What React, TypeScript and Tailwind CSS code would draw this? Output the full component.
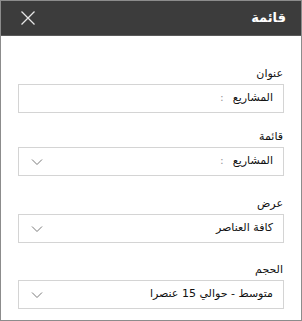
import React from "react";

const Chevron = () => (
  <svg width="12" height="8" viewBox="0 0 12 8" fill="none">
    <path d="M1 1.5 L6 6.5 L11 1.5" stroke="#7a7a7a" strokeWidth="1" />
  </svg>
);

function Field({ label, value, select, mt }: { label: string; value: React.ReactNode; select?: boolean; mt: string }) {
  return (
    <div className={`flex flex-col ${mt}`}>
      <div className="text-[11px] leading-[14px] text-[#111] text-right pr-[1px]">{label}</div>
      <div className="mt-[3px] h-[29px] border border-[#d4d4d4] flex items-center justify-between pl-[12px] pr-[10px]">
        <div className="text-[11px] text-[#111]">{value}</div>
        {select ? <Chevron /> : <span />}
      </div>
    </div>
  );
}

export default function App() {
  return (
    <div dir="rtl" className="w-[302px] h-[321px] border border-[#8c8c8c] bg-white flex flex-col" style={{ fontFamily: '"DejaVu Sans", sans-serif' }}>
      <div className="h-[35px] bg-[#3c3c3c] border-b border-[#5a5a5a] flex items-center justify-between pr-[15px] pl-[20px] shrink-0">
        <div className="text-white text-[13px] font-bold">قائمة</div>
        <svg width="14" height="14" viewBox="0 0 14 14" fill="none">
          <path d="M0.5 0.5 L13.5 13.5 M13.5 0.5 L0.5 13.5" stroke="#e6e6e6" strokeWidth="1.3" />
        </svg>
      </div>
      <div className="px-[17px] flex flex-col">
        <Field mt="mt-[31px]" label="عنوان" value={<span>المشاريع<span className="text-[#999] mr-[9px]">:</span></span>} />
        <Field mt="mt-[17px]" label="قائمة" select value={<span>المشاريع<span className="text-[#999] mr-[9px]">:</span></span>} />
        <Field mt="mt-[21px]" label="عرض" select value="كافة العناصر" />
        <Field mt="mt-[20px]" label="الحجم" select value="متوسط - حوالي 15 عنصرا" />
      </div>
    </div>
  );
}
